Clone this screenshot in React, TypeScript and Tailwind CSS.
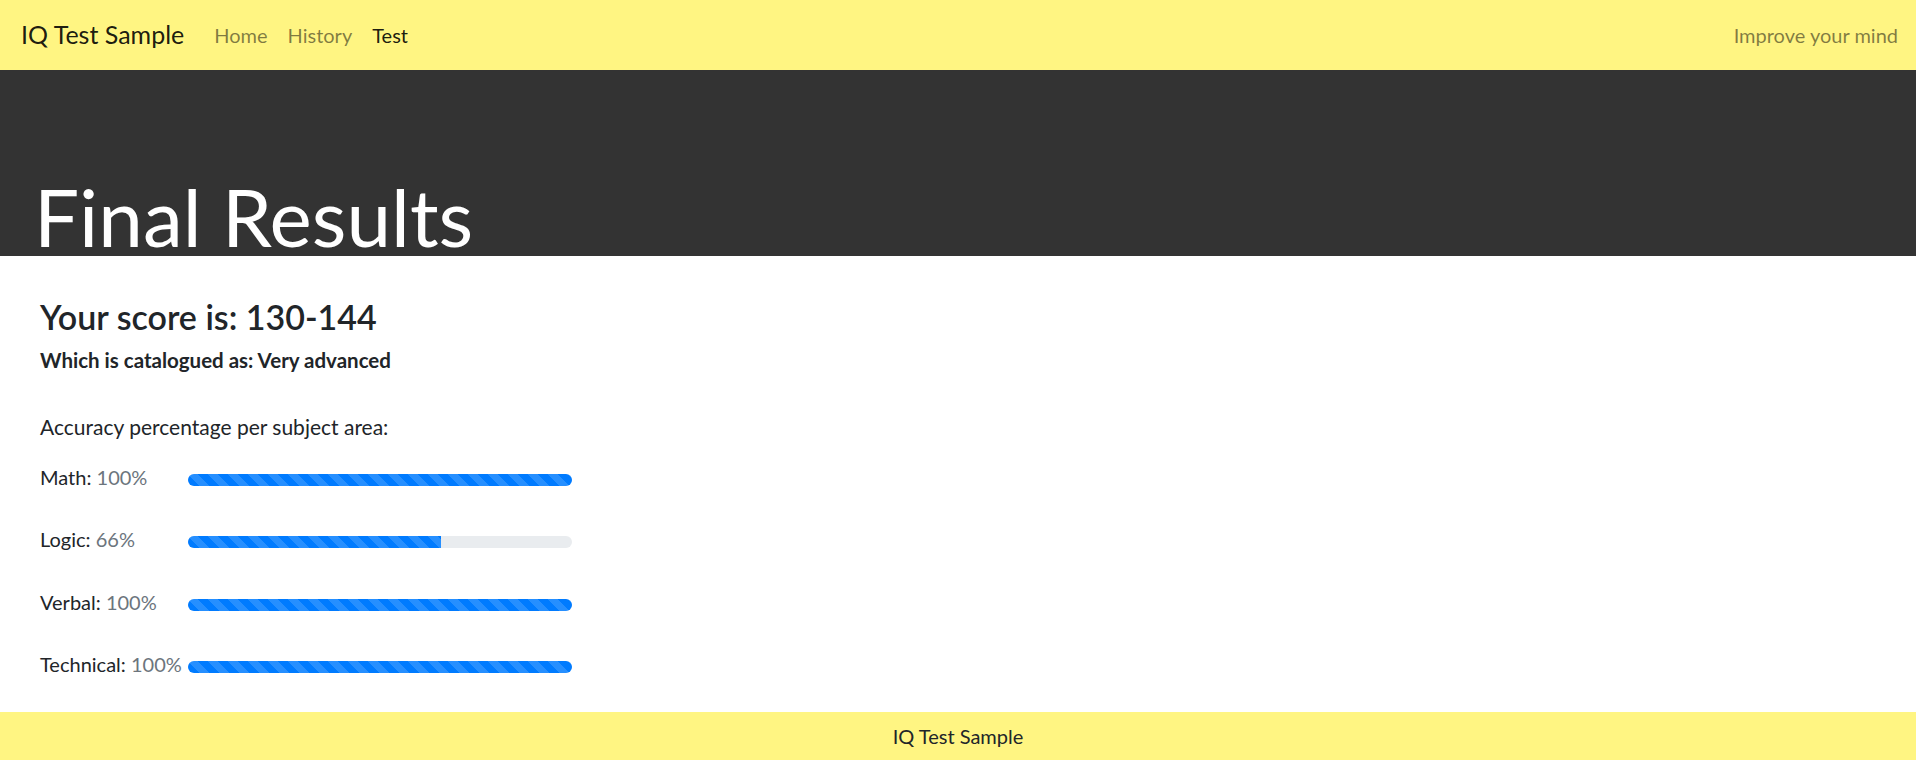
import React from 'react';

const subjects = [
  { name: 'Math', score: 100 },
  { name: 'Logic', score: 66 },
  { name: 'Verbal', score: 100 },
  { name: 'Technical', score: 100 },
];

function ProgressRow({ name, score }: { name: string; score: number }) {
  return (
    <div className="flex items-start">
      <div className="w-[148px] shrink-0 text-[20px] leading-[30px] whitespace-nowrap">
        {name}: <span className="text-[#6c757d]">{score}%</span>
      </div>
      <div className="mt-[12px] h-[12px] w-[384px] overflow-hidden rounded-[6px] bg-[#e9ecef]">
        <div
          className="h-full bg-[#007bff] bg-[linear-gradient(45deg,rgba(255,255,255,.15)_25%,transparent_25%,transparent_50%,rgba(255,255,255,.15)_50%,rgba(255,255,255,.15)_75%,transparent_75%,transparent)] bg-[length:20px_20px]"
          style={{ width: `${score}%` }}
        />
      </div>
    </div>
  );
}

export default function App() {
  return (
    <div className="flex min-h-screen flex-col bg-white font-['Lato',sans-serif] text-[#212529]">
      {/* Navbar */}
      <nav className="flex h-[70px] shrink-0 items-center justify-between bg-[#fff582] pl-[21px] pr-[18px]">
        <div className="flex items-center">
          <span className="mr-[20px] text-[25px] text-black/90">IQ Test Sample</span>
          <a className="px-[10px] text-[20px] text-black/50">Home</a>
          <a className="px-[10px] text-[20px] text-black/50">History</a>
          <a className="px-[10px] text-[20px] text-black/90">Test</a>
        </div>
        <span className="text-[20px] text-black/50">Improve your mind</span>
      </nav>

      {/* Header */}
      <header className="flex h-[186px] shrink-0 items-end bg-[#333333] pl-[34px]">
        <h1 className="text-[80px] font-normal leading-none text-white">Final Results</h1>
      </header>

      {/* Results */}
      <main className="flex-1 px-10 pt-[41px]">
        <h3 className="mb-[10px] text-[34px] font-semibold leading-[1.2]">Your score is: 130-144</h3>
        <h6 className="text-[20.5px] font-bold leading-[24px]">Which is catalogued as: Very advanced</h6>

        <p className="mt-[40px] text-[21px] leading-[30px]">Accuracy percentage per subject area:</p>

        <div className="mt-[20px] flex flex-col gap-[32.5px]">
          {subjects.map((s) => (
            <ProgressRow key={s.name} name={s.name} score={s.score} />
          ))}
        </div>
      </main>

      <footer className="flex h-[48px] shrink-0 items-center justify-center bg-[#fff582] text-[20px]">
        IQ Test Sample
      </footer>
    </div>
  );
}
